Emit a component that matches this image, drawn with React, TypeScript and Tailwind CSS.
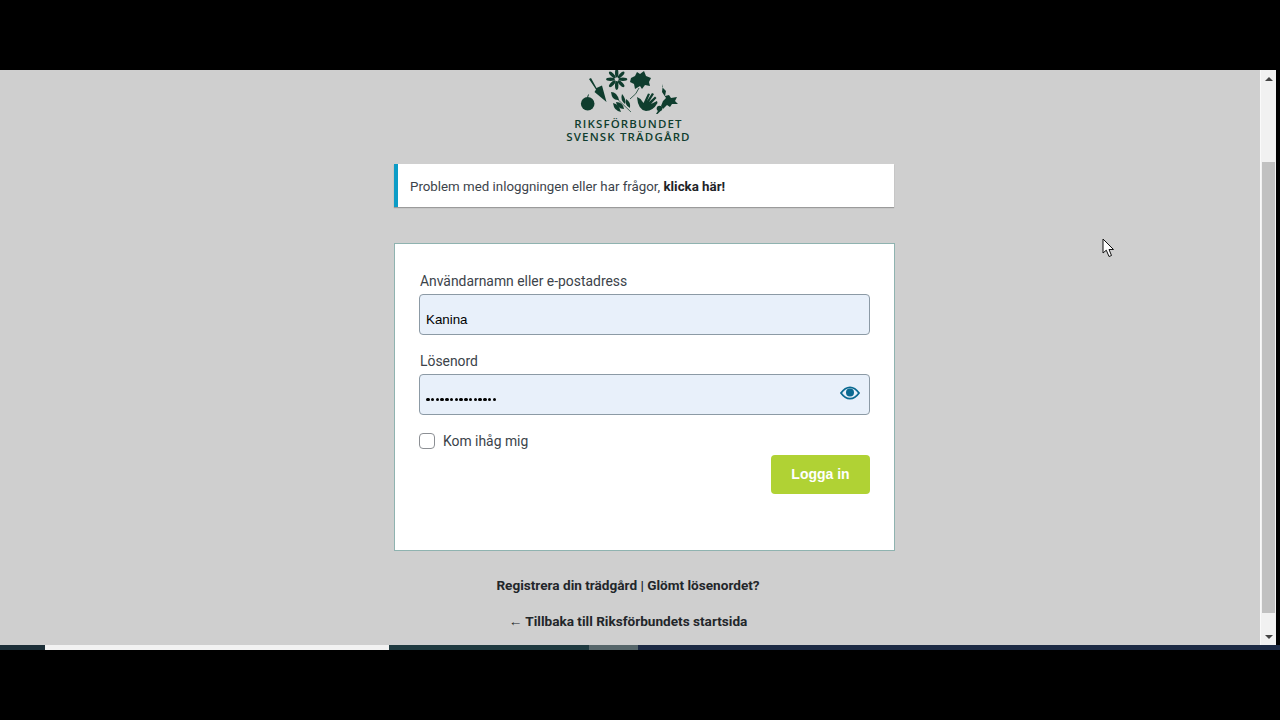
const labelFont = "font-['Roboto','Noto_Sans',sans-serif]";

function Logo() {
  const petals = [0, 45, 90, 135, 180, 225, 270, 315];
  return (
    <svg width="110" height="44" viewBox="0 0 110 44" className="block" fill="#0f3d2e">
      {/* apple */}
      <circle cx="12.7" cy="33.8" r="6.8" />
      <path d="M12.5 27.5 L13.5 24.5" stroke="#0f3d2e" strokeWidth="1" />
      {/* trowel */}
      <path d="M14 9 L16 8 L21.5 18 L27 15.5 L31.5 32 L19.5 22 L21 19.5 Z" />
      {/* flower */}
      <g transform="translate(41.7 9.3)">
        {petals.map((a) => (
          <ellipse key={a} cx="0" cy="-6.2" rx="1.7" ry="4.4" transform={`rotate(${a})`} />
        ))}
      </g>
      {/* maple leaf */}
      <path d="M56 8 L60 6 L62 2 L65 4 L69 1 L71 6 L76 8 L74 12 L75 16 L70 15 L67 19 L65 16 L60 19 L59 14 L55 12 Z" />
      <path d="M64 18 Q62 24 55 29" stroke="#0f3d2e" strokeWidth="0.8" fill="none" />
      {/* sprig */}
      <path d="M36 22 Q42 22 44 30 Q37 31 36 22Z" />
      <path d="M41 32 Q48 32 49 39 Q42 39 41 32Z" />
      <path d="M47 24 Q51 28 50 34 Q45 30 47 24Z" />
      <path d="M51 29 Q56 32 55 38 Q49 35 51 29Z" />
      <path d="M38 33 Q44 34 46 42 Q39 41 38 33Z" />
      <path d="M37 24 L56 42" stroke="#0f3d2e" strokeWidth="0.7" fill="none" />
      {/* hand */}
      <path d="M62 27 L65.5 29 L68.5 33 L73 23.5 L75 24 L72 31 L77 23 L79 24 L74 32 L80 26.5 L81.5 28 L76 34 L82 31 L82.5 33 Q78 41 71 41 Q63 40 62 27Z" />
      {/* carrot */}
      <path d="M88 14 L87 17 L91 21 L90 26 L94 25 L96 28 L102 27 L100 31 L103 34 L97 34 L95 37 L92 35 L88 39 L86 36 L88 31 L91 28 L87 22 Z" />
      <circle cx="84.5" cy="38.5" r="2.8" />
      <path d="M83.5 40 L81 44 L82.5 44 L85.5 41Z" />
    </svg>
  );
}

function EyeIcon() {
  return (
    <svg width="20" height="14" viewBox="0 0 20 14" className="block" fill="none">
      <path d="M1 7 Q5 1.3 10 1.3 Q15 1.3 19 7 Q15 12.7 10 12.7 Q5 12.7 1 7Z" stroke="#0a6a91" strokeWidth="1.8" />
      <circle cx="10" cy="6.4" r="4" fill="#0a6a91" />
    </svg>
  );
}

function Cursor() {
  return (
    <svg width="13" height="21" viewBox="0 0 13 21" className="absolute left-[1102px] top-[238px]">
      <path d="M1 1 L1 15 L4.3 12.2 L7 18.5 L9.5 17.5 L7 11.5 L11.5 11.5 Z" fill="#fff" stroke="#111" strokeWidth="1" />
    </svg>
  );
}

function Scrollbar() {
  return (
    <div className="w-[16px] flex flex-col items-center bg-[#f1f1f1] border-l border-[#fafafa]">
      <div className="h-[17px] w-full flex items-center justify-center">
        <div className="w-0 h-0 border-x-[4px] border-x-transparent border-b-[4px] border-b-[#444]" />
      </div>
      <div className="mt-[75px] h-[451px] w-[13px] bg-[#c1c1c1]" />
      <div className="flex-1 w-full flex items-end justify-center pb-[6px]">
        <div className="w-0 h-0 border-x-[4px] border-x-transparent border-t-[4px] border-t-[#444]" />
      </div>
    </div>
  );
}

export default function App() {
  return (
    <div className="relative w-[1280px] h-[720px] bg-black overflow-hidden">
      <div className="h-[70px]" />

      <div className="flex h-[575px] pr-[4px]">
        <main className={`flex-1 bg-[#cfcfcf] pl-[394px] ${labelFont}`}>
          <div className="w-[501px]">
            <div className="pl-[172px]">
              <div className="pl-[9px]">
                <Logo />
              </div>
              <div className="w-[125px] mt-[3px] text-center text-[#0f3d2e] text-[11.5px] leading-[13px] font-['Open_Sans',sans-serif] font-semibold tracking-[1.15px] whitespace-nowrap">
                <div>RIKSFÖRBUNDET</div>
                <div>SVENSK TRÄDGÅRD</div>
              </div>
            </div>

            <div className="mt-[21px] mr-[1px] h-[43px] bg-white border-l-[4px] border-[#0d9cc6] pl-[12px] pt-[2px] flex items-center text-[13.3px] text-[#3c434a] shadow-[0_1px_1px_rgba(0,0,0,0.25)]">
              <span>
                Problem med inloggningen eller har frågor, <b className="text-[#1d2327]">klicka här!</b>
              </span>
            </div>

            <div className="mt-[36px] h-[308px] bg-white border border-[#8fb3b0] px-[24px] pt-[27px]">
              <label className="block pl-[1px] text-[13.9px] leading-[20px] text-[#3c434a]">Användarnamn eller e-postadress</label>
              <div className="mt-[3px] h-[41px] rounded-[4px] bg-[#e8f0fa] border border-[#8c9aa5] pl-[6px] pt-[11px] flex items-center font-['Liberation_Sans',sans-serif] text-[13.33px] text-black">
                Kanina
              </div>

              <label className="block pl-[1px] mt-[16px] text-[13.9px] leading-[20px] text-[#3c434a]">Lösenord</label>
              <div className="mt-[3px] h-[41px] rounded-[4px] bg-[#e8f0fa] border border-[#8c9aa5] pl-[6px] pr-[9px] flex items-center justify-between">
                <span className="flex gap-[1.25px] pt-[10px]">
                  {Array.from({ length: 15 }).map((_, i) => (
                    <span key={i} className="w-[3.5px] h-[3.5px] rounded-full bg-black" />
                  ))}
                </span>
                <span className="-mt-[4px]">
                  <EyeIcon />
                </span>
              </div>

              <div className="mt-[16px] flex items-center gap-[8px]">
                <span className="w-[16px] h-[16px] rounded-[4px] border border-[#8c8f94] bg-white" />
                <span className="text-[13.9px] leading-[20px] text-[#3c434a]">Kom ihåg mig</span>
              </div>

              <div className="mt-[4px] flex justify-end">
                <button className="w-[99px] h-[39px] rounded-[4px] bg-[#b0d234] text-white font-['Liberation_Sans',sans-serif] font-bold text-[14px]">
                  Logga in
                </button>
              </div>
            </div>

            <div className="w-[468px] text-center text-[13.6px] font-bold text-[#22262a]">
              <p className="mt-[24px] leading-[20px]">Registrera din trädgård | Glömt lösenordet?</p>
              <p className="mt-[16px] leading-[20px]">← Tillbaka till Riksförbundets startsida</p>
            </div>
          </div>
        </main>
        <Scrollbar />
      </div>

      <div className="h-[5px] flex">
        <div className="w-[45px] bg-[#1c2f38]" />
        <div className="w-[344px] bg-[#f2f2f2]" />
        <div className="w-[200px] bg-[#1f3a40]" />
        <div className="w-[49px] bg-[#56666a]" />
        <div className="flex-1 bg-[#1c2a44]" />
      </div>

      <Cursor />
    </div>
  );
}
